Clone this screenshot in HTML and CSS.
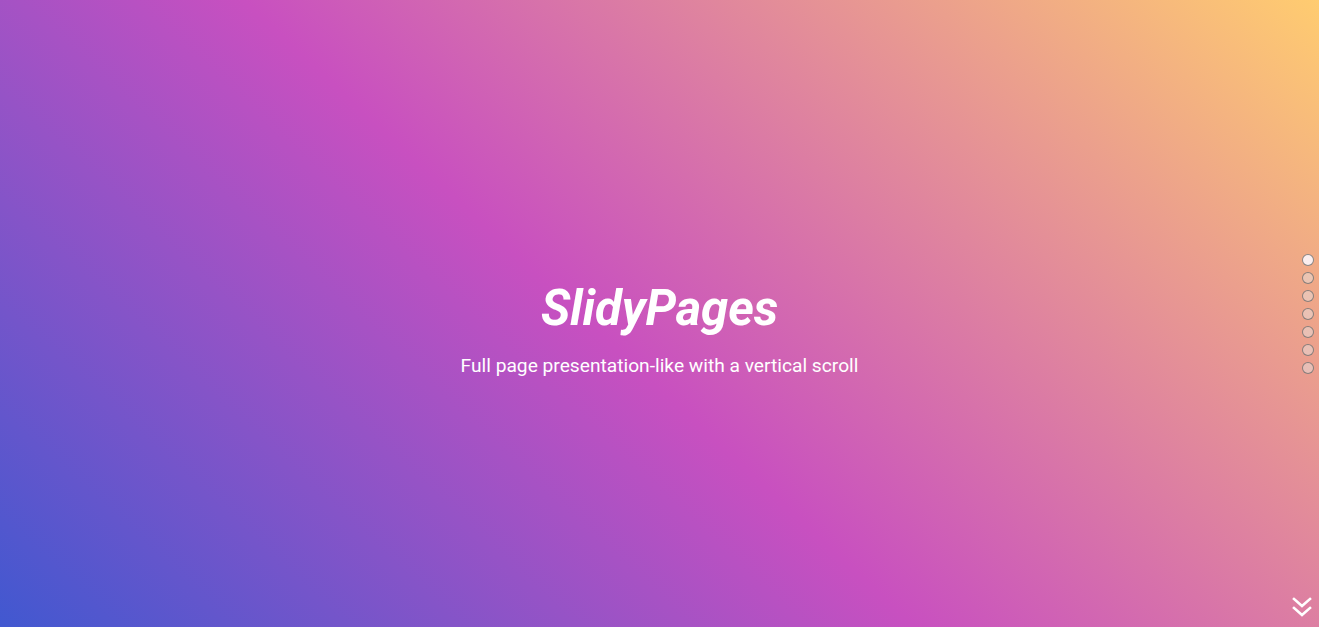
FILE: index.html
```html
<!DOCTYPE html>
<html>
<head>
<meta charset="utf-8">
<link rel="stylesheet" href="styles.css">
</head>
<body>
<main class="slide">
  <div class="hero">
    <h1 class="title">SlidyPages</h1>
    <p class="subtitle">Full page presentation-like with a vertical scroll</p>
  </div>
</main>
<nav class="dots">
  <span class="dot active"></span>
  <span class="dot"></span>
  <span class="dot"></span>
  <span class="dot"></span>
  <span class="dot"></span>
  <span class="dot"></span>
  <span class="dot"></span>
</nav>
<div class="next">
  <svg width="20" height="22" viewBox="0 0 20 22" fill="none" stroke="#fff" stroke-width="2.6" stroke-linecap="square">
    <polyline points="2,3 10,10 18,3"/>
    <polyline points="2,12 10,19 18,12"/>
  </svg>
</div>
</body>
</html>
```
FILE: styles.css
```css
html, body {
  margin: 0;
  padding: 0;
  height: 100%;
  overflow: hidden;
}
body {
  font-family: Roboto, "Liberation Sans", sans-serif;
  background-color: #4158D0;
  background-image: linear-gradient(43deg, #4158D0 0%, #C850C0 46%, #FFCC70 100%);
  color: #fff;
}
.slide {
  height: 627px;
  display: flex;
  align-items: center;
  justify-content: center;
}
.hero {
  text-align: center;
  margin-top: 31px;
}
.title {
  margin: 0;
  font-size: 49px;
  font-weight: 700;
  font-style: italic;
  letter-spacing: -0.1px;
  line-height: 56px;
}
.subtitle {
  margin: 17px 0 0;
  font-size: 19.2px;
  font-weight: 400;
  line-height: 24px;
}
.dots {
  position: fixed;
  right: 5px;
  top: 254px;
  display: flex;
  flex-direction: column;
  gap: 6px;
}
.dot {
  width: 10px;
  height: 10px;
  border-radius: 50%;
  border: 1px solid rgba(110, 110, 110, 0.8);
  background: rgba(230, 230, 230, 0.45);
}
.dot.active {
  background: #fbeeee;
}
.next {
  position: fixed;
  right: 7px;
  bottom: 9px;
  line-height: 0;
}
```
